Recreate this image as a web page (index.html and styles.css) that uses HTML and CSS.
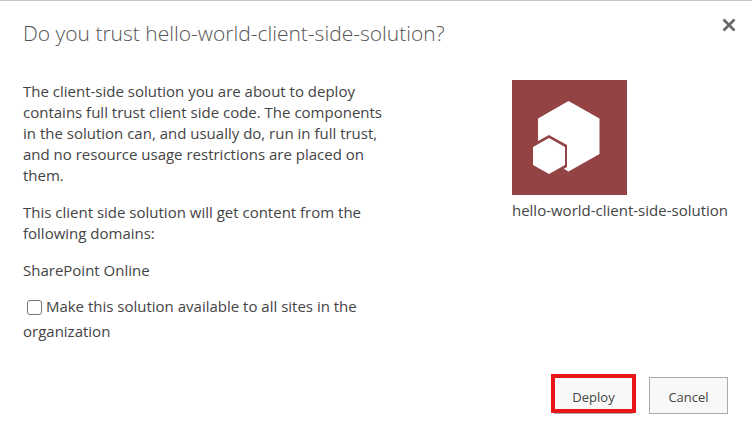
FILE: index.html
```html
<!DOCTYPE html>
<html lang="en">
<head>
    <meta charset="UTF-8">
    <meta name="viewport" content="width=device-width, initial-scale=1.0">
    <title>Do you trust hello-world-client-side-solution?</title>
    <link rel="stylesheet" href="styles.css">
</head>
<body>
    <div class="dialog" role="dialog" aria-labelledby="dialog-title">
        <header class="dialog-header">
            <h1 id="dialog-title">Do you trust hello-world-client-side-solution?</h1>
            <button class="close-btn" type="button" aria-label="Close">
                <svg width="14" height="14" viewBox="0 0 14 14">
                    <path d="M1.500 1.500 L12.500 12.500 M12.500 1.500 L1.500 12.500" stroke="#666" stroke-width="2.6" fill="none"/>
                </svg>
            </button>
        </header>

        <form class="dialog-form">
            <div class="dialog-body">
                <div class="message">
                    <p>The client-side solution you are about to deploy contains full trust client side code. The components in the solution can, and usually do, run in full trust, and no resource usage restrictions are placed on them.</p>
                    <p>This client side solution will get content from the following domains:</p>
                    <p>SharePoint Online</p>
                    <div class="option">
                        <input type="checkbox" id="all-sites">
                        <label for="all-sites">Make this solution available to all sites in the organization</label>
                    </div>
                </div>

                <div class="solution">
                    <!-- Solution icon: two hexagons -->
                    <svg class="solution-icon" width="115" height="115" viewBox="0 0 115 115" aria-hidden="true">
                        <rect width="115" height="115" fill="#934343"/>
                        <path d="M56.500 21 L87.500 38.500 V74 L56.500 91.500 L26 74 V38.500 Z" fill="#fff"/>
                        <path d="M37 55 L55 65 V87 L37 97 L18.500 87 V65 Z" fill="#934343"/>
                        <path d="M37 58 L53 67 V85 L37 94 L21 85 V67 Z" fill="#fff"/>
                    </svg>
                    <div class="solution-name">hello-world-client-side-solution</div>
                </div>
            </div>

            <div class="dialog-buttons">
                <button class="btn highlighted" type="button">Deploy</button>
                <button class="btn" type="button">Cancel</button>
            </div>
        </form>
    </div>
</body>
</html>
```

FILE: styles.css
```css
body {
    margin: 0;
    background-color: #fff;
    color: #444;
    font-family: "Segoe UI", "Open Sans", "Noto Sans", sans-serif;
    font-size: 15px;
    line-height: 21px;
}

.dialog {
    border-top: 1px solid #c6c6c6;
    padding: 16px 24px 24px 23px;
}

/* Title bar */
.dialog-header {
    display: flex;
    justify-content: space-between;
    align-items: flex-start;
}

h1 {
    margin: 0;
    color: #555;
    font-size: 21px;
    font-weight: 300;
    line-height: 32px;
}

.close-btn {
    display: flex;
    margin-right: -9px;
    padding: 1px;
    border: none;
    background: none;
    cursor: pointer;
}

/* Message on the left, solution on the right */
.dialog-body {
    display: flex;
    justify-content: space-between;
    align-items: flex-start;
    margin-top: 31px;
}

.message {
    width: 51%;
    padding-top: 1px;
}

.message p {
    margin: 0 0 16px;
}

.option {
    margin-top: -3px;
    line-height: 25px;
}

.option input {
    appearance: none;
    width: 15px;
    height: 15px;
    margin: 0 0 0 4px;
    border: 1px solid #767676;
    border-radius: 3px;
    background-color: #fff;
    vertical-align: -3px;
}

.option input:checked {
    background-color: #0078d7;
}

.solution-icon {
    display: block;
    margin-bottom: 5px;
}

/* Buttons */
.dialog-buttons {
    display: flex;
    justify-content: flex-end;
    gap: 16px;
    margin-top: 33px;
}

.btn {
    position: relative;
    min-width: 79px;
    height: 37px;
    padding: 2px 10px 0;
    border: 1px solid #ababab;
    background-color: #f8f8f8;
    color: #444;
    font-family: inherit;
    font-size: 13px;
    cursor: pointer;
}

.btn:hover {
    background-color: #eee;
}

.highlighted::after {
    content: "";
    position: absolute;
    inset: -4px -4px 0;
    border: 4px solid #e8161b;
}
```
